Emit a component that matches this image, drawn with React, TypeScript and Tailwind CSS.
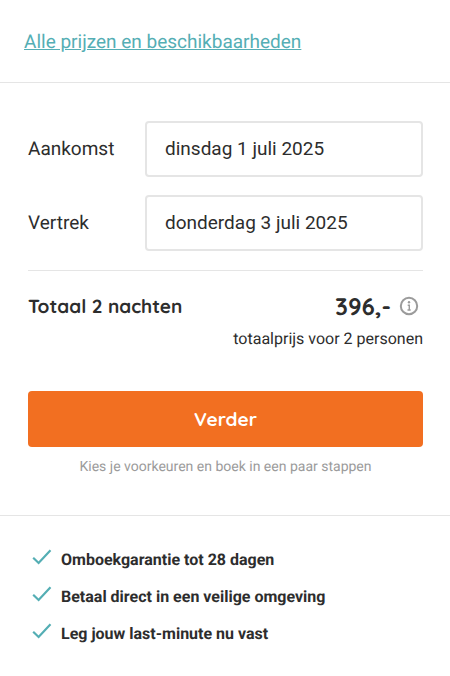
import { useState } from "react";

const usps = [
  "Omboekgarantie tot 28 dagen",
  "Betaal direct in een veilige omgeving",
  "Leg jouw last-minute nu vast",
];

function InfoIcon() {
  return (
    <svg width="20" height="20" viewBox="0 0 20 20" fill="none" aria-hidden="true">
      <circle cx="10" cy="10" r="8.2" stroke="#9b9b9b" strokeWidth="2" />
      <circle cx="10" cy="6.3" r="1.2" fill="#9b9b9b" />
      <path d="M8.7 9.2h1.6v5M8.5 14h3.2" stroke="#9b9b9b" strokeWidth="1.4" />
    </svg>
  );
}

function CheckIcon() {
  return (
    <svg width="20" height="18" viewBox="0 0 20 18" fill="none" aria-hidden="true">
      <path d="M1.2 9.8 6.6 15 18.5 2.3" stroke="#54aeb4" strokeWidth="2.2" />
    </svg>
  );
}

export default function App() {
  const [arrival, setArrival] = useState("dinsdag 1 juli 2025");
  const [departure, setDeparture] = useState("donderdag 3 juli 2025");

  return (
    <main className="bg-white font-[Roboto,sans-serif] text-[#2d2d2d] [text-rendering:geometricPrecision]">
      <div className="border-b border-[#e5e5e5] px-6 pt-7 pb-[26px]">
        <a href="#prijzen" className="block text-[19px] leading-7 text-[#54aeb4] underline">
          Alle prijzen en beschikbaarheden
        </a>
      </div>

      <form
        className="border-b border-[#e5e5e5] pt-[38px] pr-[27px] pb-9 pl-7"
        onSubmit={(e) => e.preventDefault()}
      >
        <div className="flex flex-col gap-[18px] border-b border-[#e5e5e5] pb-[19px] text-[19px]">
          <div className="flex items-center">
            <label htmlFor="arrival" className="w-[117px] shrink-0">Aankomst</label>
            <input
              id="arrival"
              type="text"
              className="h-14 w-full min-w-0 rounded border-2 border-[#e5e5e5] bg-white px-[18px] pb-0.5"
              value={arrival}
              onChange={(e) => setArrival(e.target.value)}
            />
          </div>
          <div className="flex items-center">
            <label htmlFor="departure" className="w-[117px] shrink-0">Vertrek</label>
            <input
              id="departure"
              type="text"
              className="h-14 w-full min-w-0 rounded border-2 border-[#e5e5e5] bg-white px-[18px] pb-0.5"
              value={departure}
              onChange={(e) => setDeparture(e.target.value)}
            />
          </div>
        </div>

        <div className="flex items-center justify-between pt-[19px] font-[Quicksand,Lato,sans-serif] font-bold">
          <h2 className="text-[19px] leading-8">Totaal 2 nachten</h2>
          <div className="flex items-center gap-2 pr-1">
            <span className="text-2xl">396,-</span>
            <button type="button" aria-label="Meer informatie">
              <InfoIcon />
            </button>
          </div>
        </div>
        <p className="pt-[5px] text-right text-base">totaalprijs voor 2 personen</p>

        <button
          type="submit"
          className="mt-10 h-14 w-full rounded bg-[#f26f21] font-[Quicksand,Lato,sans-serif] text-[19px] font-bold text-white"
        >
          Verder
        </button>
        <p className="pt-2 text-center text-sm leading-6 text-[#9b9b9b]">
          Kies je voorkeuren en boek in een paar stappen
        </p>
      </form>

      <ul className="flex flex-col gap-[13px] px-8 pt-8 pb-7">
        {usps.map((usp) => (
          <li key={usp} className="flex items-start gap-[9px] text-base font-bold">
            <CheckIcon />
            {usp}
          </li>
        ))}
      </ul>
    </main>
  );
}
